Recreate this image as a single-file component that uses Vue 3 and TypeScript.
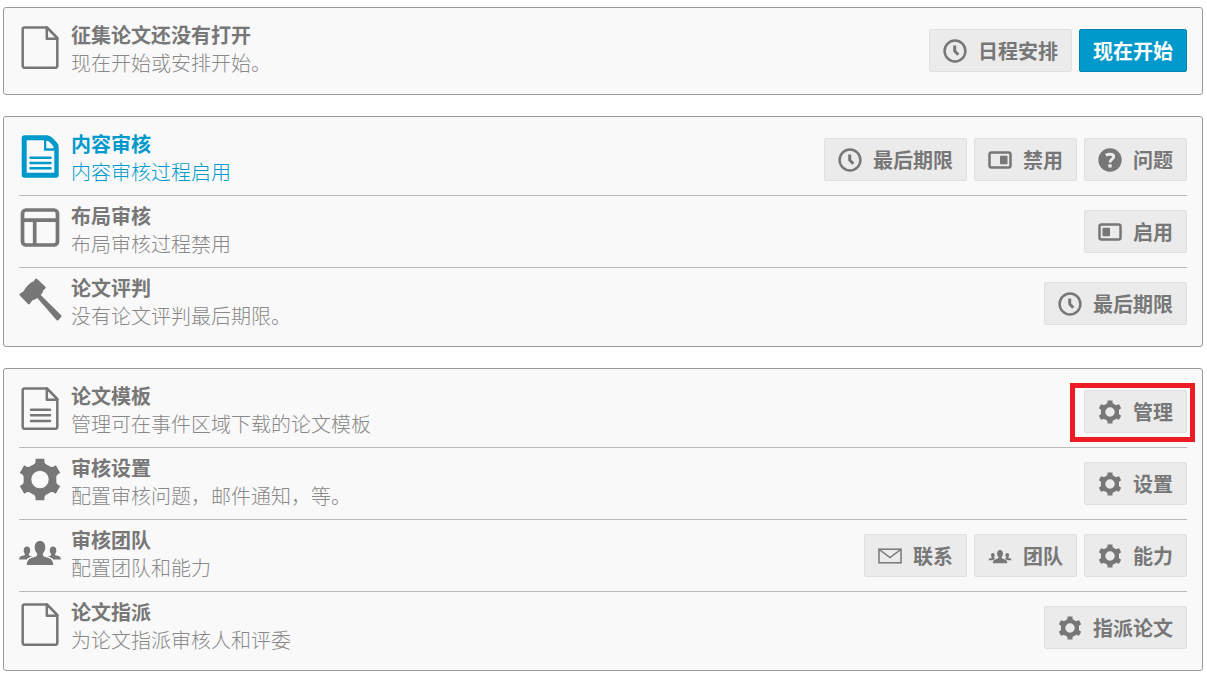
<script setup lang="ts">
type IconName = 'file' | 'file-bold' | 'file-text' | 'layout' | 'gavel' | 'gear' | 'team'
type ActionIcon = 'clock' | 'toggle-on' | 'toggle-off' | 'question' | 'gear' | 'mail' | 'team'

interface Action {
  label: string
  icon?: ActionIcon
  primary?: boolean
  marked?: boolean
}

interface Item {
  title: string
  text: string
  icon: IconName
  active?: boolean
  actions: Action[]
}

const panels: Item[][] = [
  [
    {
      title: '征集论文还没有打开',
      text: '现在开始或安排开始。',
      icon: 'file',
      actions: [
        { label: '日程安排', icon: 'clock' },
        { label: '现在开始', primary: true },
      ],
    },
  ],
  [
    {
      title: '内容审核',
      text: '内容审核过程启用',
      icon: 'file-bold',
      active: true,
      actions: [
        { label: '最后期限', icon: 'clock' },
        { label: '禁用', icon: 'toggle-on' },
        { label: '问题', icon: 'question' },
      ],
    },
    {
      title: '布局审核',
      text: '布局审核过程禁用',
      icon: 'layout',
      actions: [{ label: '启用', icon: 'toggle-off' }],
    },
    {
      title: '论文评判',
      text: '没有论文评判最后期限。',
      icon: 'gavel',
      actions: [{ label: '最后期限', icon: 'clock' }],
    },
  ],
  [
    {
      title: '论文模板',
      text: '管理可在事件区域下载的论文模板',
      icon: 'file-text',
      actions: [{ label: '管理', icon: 'gear', marked: true }],
    },
    {
      title: '审核设置',
      text: '配置审核问题，邮件通知，等。',
      icon: 'gear',
      actions: [{ label: '设置', icon: 'gear' }],
    },
    {
      title: '审核团队',
      text: '配置团队和能力',
      icon: 'team',
      actions: [
        { label: '联系', icon: 'mail' },
        { label: '团队', icon: 'team' },
        { label: '能力', icon: 'gear' },
      ],
    },
    {
      title: '论文指派',
      text: '为论文指派审核人和评委',
      icon: 'file',
      actions: [{ label: '指派论文', icon: 'gear' }],
    },
  ],
]

// Six-toothed gear outline with concave valleys and a round hole.
function gearPath(cx: number, cy: number, tip: number, body: number, hole: number): string {
  const at = (r: number, deg: number) => {
    const a = (deg * Math.PI) / 180
    return `${(cx + r * Math.cos(a)).toFixed(2)} ${(cy + r * Math.sin(a)).toFixed(2)}`
  }
  let d = ''
  for (let k = 0; k < 6; k++) {
    const a = -90 + k * 60
    d += `${k ? 'L' : 'M'}${at(tip, a - 12)}L${at(tip, a + 12)}`
    d += `C${at(body, a + 14)} ${at(body, a + 20)} ${at(body, a + 30)}`
    d += `C${at(body, a + 40)} ${at(body, a + 46)} ${at(tip, a + 48)}`
  }
  d += `Z M${cx + hole} ${cy}A${hole} ${hole} 0 1 0 ${cx - hole} ${cy}A${hole} ${hole} 0 1 0 ${cx + hole} ${cy}Z`
  return d
}

const largeGear = gearPath(21, 21.5, 21.3, 16.4, 8.7)
const smallGear = gearPath(12, 12, 11.8, 9, 4.7)
const teamPath =
  'M21 11c3.4 0 5.3 2.600 5.300 6.200 0 2.600-1 4.900-2.500 6.200 0 2.500.9 3.200 4.500 4.200 3.700 1 5.700 3 6 7.400H7.700c.3-4.400 2.300-6.400 6-7.400 3.600-1 4.500-1.700 4.500-4.200-1.500-1.300-2.500-3.600-2.500-6.200 0-3.600 1.900-6.200 5.300-6.200Z' +
  'M8 16.500c2 0 3.200 1.600 3.200 3.800 0 1.600-.5 2.900-1.400 3.700 0 1.500.6 1.800 3.200 2.600-2.400.6-4.200 1.500-5.500 2.900H0c.2-2.400 1.200-3.200 3.400-3.700 2-.5 2.600-.7 2.600-1.900-.9-.8-1.300-2-1.300-3.600 0-2.200 1.200-3.800 3.300-3.800Z' +
  'M34 16.500c-2 0-3.200 1.600-3.200 3.800 0 1.600.5 2.900 1.400 3.700 0 1.500-.6 1.800-3.200 2.600 2.400.6 4.200 1.500 5.500 2.900H42c-.2-2.400-1.200-3.200-3.400-3.700-2-.5-2.600-.7-2.600-1.900.9-.8 1.300-2 1.300-3.600 0-2.200-1.200-3.800-3.300-3.800Z'
</script>

<template>
  <main class="page">
    <section v-for="(panel, p) in panels" :key="p" class="panel">
      <article
        v-for="item in panel"
        :key="item.title"
        class="row"
        :class="{ active: item.active }"
      >
        <svg class="row-icon" viewBox="0 0 44 44" aria-hidden="true">
          <g v-if="item.icon === 'file' || item.icon === 'file-text'" class="line">
            <path d="M5.500 2.500H28L38.300 13V41a1.800 1.800 0 0 1-1.800 1.800H5.500A1.800 1.800 0 0 1 3.700 41V4.300a1.800 1.800 0 0 1 1.800-1.800Z" />
            <path d="M27.800 2.500V13.700H38.300" />
            <path v-if="item.icon === 'file-text'" d="M12 23.700H31M12 29.300H31M12 35H31" />
          </g>
          <g v-else-if="item.icon === 'file-bold'">
            <path
              class="solid"
              d="M5.500 1.300H28Q31 1.300 33.300 3.800L37.500 8Q39.700 10.300 39.700 13.500V41a2.800 2.800 0 0 1-2.800 2.800H5.500A2.800 2.800 0 0 1 2.700 41V4.100a2.800 2.800 0 0 1 2.800-2.800ZM7.700 6.300V38.700H35.300V16.700H25V6.300ZM27.300 6.700V14.300H34.800Q34.500 12 33 10.500L30.500 8Q29.200 6.700 27.300 6.700Z"
            />
            <path class="line" d="M11.500 23.700H31.500M11.500 29H31.500M11.500 34.300H31.500" />
          </g>
          <g v-else-if="item.icon === 'layout'" class="line thick">
            <rect x="3.500" y="4" width="35" height="35" rx="3.500" />
            <path d="M3.500 14.200H38.500M15.700 14.200V39" />
          </g>
          <path
            v-else-if="item.icon === 'gavel'"
            class="solid"
            d="M16.700.6Q17.400.2 18.200.9L26.400 8.800Q27.200 9.800 26.300 10.500L24.400 12.200Q23.700 15 21.700 17L42.200 37.200Q42.900 38 42.300 38.800L39.300 42.200Q38.500 43 37.700 42.200L18.300 20.100Q15.600 21.900 13.200 22.500L10.700 26Q9.900 26.800 9 26L.6 17.300Q0 16.400.9 15.700L4.500 13.200Q9.500 5 14.700 3.200Z"
          />
          <path v-else-if="item.icon === 'gear'" class="solid" :d="largeGear" />
          <path v-else class="solid" :d="teamPath" />
        </svg>

        <div class="info">
          <h2 class="title">{{ item.title }}</h2>
          <p class="text">{{ item.text }}</p>
        </div>

        <div class="actions">
          <button
            v-for="action in item.actions"
            :key="action.label"
            type="button"
            class="button"
            :class="{ primary: action.primary, marked: action.marked }"
          >
            <svg v-if="action.icon" class="button-icon" viewBox="0 0 24 24" aria-hidden="true">
              <g v-if="action.icon === 'clock'" class="line">
                <circle cx="12" cy="12" r="10.400" />
                <path class="hands" d="M11.700 6.500V12L15.300 15.800" />
              </g>
              <g v-else-if="action.icon === 'toggle-on' || action.icon === 'toggle-off'">
                <rect class="line" x="1.500" y="4.400" width="21" height="15.200" rx="2" />
                <rect
                  class="solid"
                  :x="action.icon === 'toggle-on' ? 12 : 4.500"
                  y="7.700"
                  width="7.500"
                  height="8.600"
                  rx="1"
                />
              </g>
              <g v-else-if="action.icon === 'question'">
                <circle class="solid" cx="12" cy="12" r="11.700" />
                <path class="cut" d="M7.800 7.300Q9.800 6.200 12 6.200C14.600 6.200 15.700 7.200 15.700 8.800 15.700 11.200 12 11.200 12 14.500" />
                <rect class="cut-dot" x="10.300" y="16.300" width="3.400" height="3.200" />
              </g>
              <path v-else-if="action.icon === 'gear'" class="solid" :d="smallGear" />
              <g v-else-if="action.icon === 'mail'" class="line thin">
                <rect x="1" y="5.200" width="22" height="13.600" />
                <path d="M1.300 5.500L12 13.600 22.700 5.500" />
              </g>
              <path v-else class="solid" transform="translate(.5 0) scale(.55)" :d="teamPath" />
            </svg>
            <span>{{ action.label }}</span>
          </button>
        </div>
      </article>
    </section>
  </main>
</template>

<style>
body {
  margin: 0;
  background: #fff;
}
</style>

<style scoped>
.page {
  display: flex;
  flex-direction: column;
  gap: 21px;
  padding: 7px 4px 3px 3px;
  font-family: "Noto Sans CJK SC", "Liberation Sans", sans-serif;
  font-size: 20px;
  line-height: 28px;
}

.panel {
  box-sizing: border-box;
  min-height: 88px;
  padding: 7px 15px;
  border: 1px solid #999;
  border-radius: 3px;
  background: #f9f9f9;
}

.row {
  display: flex;
  align-items: center;
  min-height: 71px;
  color: #888;
}

.row + .row {
  border-top: 1px solid #bbb;
}

.row-icon {
  flex: none;
  align-self: flex-start;
  width: 44px;
  height: 44px;
  margin: 10px 8px 0 0;
  color: #777;
}

.info {
  flex: 1;
  min-width: 0;
  padding-bottom: 3px;
}

.title,
.text {
  margin: 0;
  font-size: 20px;
}

.title {
  font-weight: 700;
  color: #777;
}

.text {
  font-weight: 300;
}

.active,
.active .title,
.active .row-icon {
  color: #09c;
}

.actions {
  display: flex;
  gap: 7px;
}

.button {
  position: relative;
  display: flex;
  align-items: center;
  gap: 11px;
  height: 43px;
  padding: 0 13px;
  border: 1px solid #dfdfdf;
  border-radius: 2px;
  background: #ebebeb;
  color: #777;
  font: inherit;
  font-weight: 700;
  white-space: nowrap;
  cursor: pointer;
}

.primary {
  border-color: #0084b4;
  background: #09c;
  color: #fff;
}

.marked::after {
  content: "";
  position: absolute;
  inset: -8px -9px -10px -15px;
  border: 5px solid #ed1c24;
}

.button-icon {
  flex: none;
  width: 24px;
  height: 24px;
}

.solid {
  fill: currentColor;
  fill-rule: evenodd;
}

.line {
  fill: none;
  stroke: currentColor;
  stroke-width: 2.5;
  stroke-linecap: round;
  stroke-linejoin: round;
}

.thick {
  stroke-width: 3.7;
  stroke-linecap: butt;
}

.thin {
  stroke-width: 1.5;
  stroke-linejoin: miter;
}

.hands {
  stroke-width: 3;
  stroke-linecap: butt;
}

.cut {
  fill: none;
  stroke: #ebebeb;
  stroke-width: 3;
}

.cut-dot {
  fill: #ebebeb;
}
</style>
